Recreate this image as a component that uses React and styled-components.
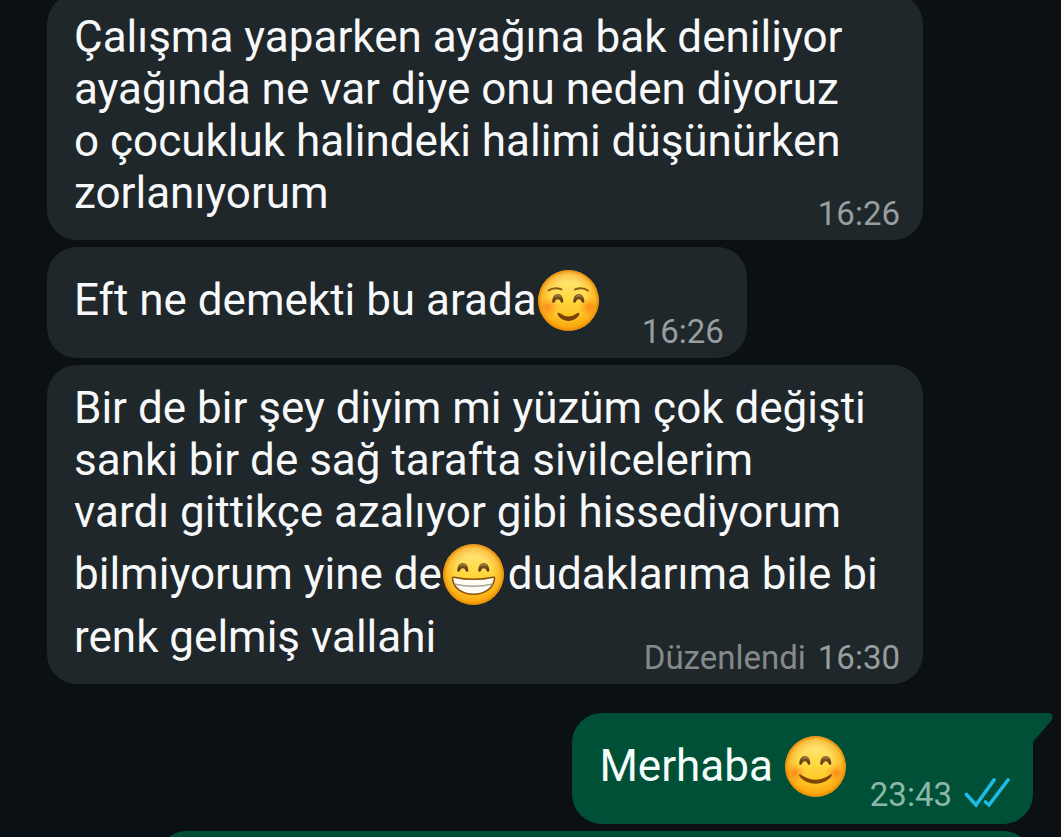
import React, { useId } from "react";
import styled, { createGlobalStyle } from "styled-components";

const GlobalStyle = createGlobalStyle`
  * {
    box-sizing: border-box;
  }

  body {
    margin: 0;
    background-color: #0b1014;
    font-family: Roboto, "Noto Sans", sans-serif;
  }
`;

const Chat = styled.main`
  display: flex;
  flex-direction: column;
  gap: 7px;
  height: 100vh;
  padding: 0 28px 0 47px;
  overflow: hidden;
`;

const Bubble = styled.article`
  position: relative;
  display: grid;
  flex-shrink: 0;
  align-self: ${({ $sent }) => ($sent ? "flex-end" : "flex-start")};
  width: ${({ $wide }) => ($wide ? "calc(100% - 110px)" : "auto")};
  min-height: 111px;
  padding: 17px 23px 7px 27px;
  border-radius: ${({ $tail }) => ($tail ? "30px 0 30px 30px" : "30px")};
  background-color: ${({ $sent }) => ($sent ? "#005038" : "#1f272a")};
  color: ${({ $sent }) => ($sent ? "#f4fdf9" : "#f7f8fa")};

  &:first-child {
    margin-top: -6px;
  }
`;

const Texto = styled.p`
  grid-area: 1 / 1;
  margin: 0;
  padding-bottom: 14px;
  font-size: 44px;
  line-height: 52px;
`;

// wide bubbles let the time share the last line with the text
const Meta = styled.footer`
  grid-area: ${({ $wide }) => ($wide ? "1 / 1" : "1 / 2")};
  display: flex;
  align-items: center;
  align-self: end;
  justify-self: end;
  gap: 12px;
  margin-left: ${({ $sent }) => ($sent ? "20px" : "39px")};
  padding-bottom: ${({ $sent }) => ($sent ? "3px" : "0")};
  color: ${({ $sent }) => ($sent ? "#8cb8a8" : "#989da0")};
  font-size: 33px;
  line-height: 38px;
`;

const Editado = styled.span`
  color: #85898b;
`;

const EmojiSvg = styled.svg`
  width: 61px;
  height: 61px;
  margin: 6px 4px 6px 1px;
  vertical-align: -22px;
`;

const Checks = styled.svg`
  width: 46px;
  height: 36px;
`;

const Tail = styled.svg`
  position: absolute;
  top: 0;
  left: 100%;
  width: 21px;
  height: 30px;
`;

const Separador = styled.div`
  height: 15px;
  flex-shrink: 0;
`;

const nomes = {
  calm: "☺️",
  grin: "😁",
  blush: "😊",
};

function Emoji({ tipo }) {
  const id = useId();
  const eyeY = tipo === "calm" ? 32 : tipo === "grin" ? 27 : 28;

  return (
    <EmojiSvg viewBox="0 0 61 61" role="img" aria-label={nomes[tipo]}>
      <defs>
        <linearGradient id={`${id}f`} x1="0" y1="0" x2="0" y2="1">
          <stop offset="0" stopColor="#ffec8c" />
          <stop offset="0.5" stopColor="#ffd63e" />
          <stop offset="1" stopColor="#ffb60f" />
        </linearGradient>
        <radialGradient id={`${id}e`}>
          <stop offset="0.6" stopColor="#f59a0a" stopOpacity="0" />
          <stop offset="0.88" stopColor="#f59a0a" stopOpacity="0.5" />
          <stop offset="1" stopColor="#e88400" />
        </radialGradient>
        <radialGradient id={`${id}b`}>
          <stop offset="0" stopColor="#ff6f14" stopOpacity="0.7" />
          <stop offset="1" stopColor="#ff8a14" stopOpacity="0" />
        </radialGradient>
        <linearGradient id={`${id}o`} x1="0" y1="0" x2="0" y2="1">
          <stop offset="0" stopColor="#8a6428" />
          <stop offset="1" stopColor="#57340a" />
        </linearGradient>
      </defs>
      <circle cx="30.5" cy="30.5" r="30.3" fill={`url(#${id}f)`} />
      <circle cx="30.5" cy="30.5" r="30.3" fill={`url(#${id}e)`} />
      {tipo !== "grin" && (
        <>
          <ellipse cx="10" cy="37" rx="11" ry="10" fill={`url(#${id}b)`} />
          <ellipse cx="51" cy="37" rx="11" ry="10" fill={`url(#${id}b)`} />
        </>
      )}
      {[14, 35].map((x) => (
        <g key={x} transform={`translate(${x} ${eyeY})`}>
          <path
            d="M0.3 -0.5C0.3 -5 2.6 -8 5.8 -8S11.3 -5 11.3 -0.5C11.3 1 9.3 1 8.7 -0.2C8 -2 7 -2.7 5.8 -2.7S3.6 -2 2.9 -0.2C2.3 1 0.3 1 0.3 -0.5Z"
            fill={`url(#${id}o)`}
          />
          <path d="M3 -5.4Q5.8 -7.6 8.6 -5.4" fill="none" stroke="#a58855" strokeWidth="1" />
        </g>
      ))}
      {tipo === "calm" && (
        <>
          <path
            d="M10.5 20.5Q16 16.5 23.5 19.4M37 19.4Q44.5 16.5 50 20.5"
            fill="none"
            stroke="#8a5912"
            strokeWidth="2"
            strokeLinecap="round"
          />
          <path
            d="M19.5 43.5Q20.5 42 22.2 43.5Q30.5 49.5 38.8 43.5Q40.5 42 41.5 43.5C41.8 45.5 37 51 30.5 51S19.2 45.5 19.5 43.5Z"
            fill="#75430a"
          />
        </>
      )}
      {tipo === "blush" && (
        <path
          d="M14 38.5Q15 37.6 16.4 39Q30.5 48.5 44.6 39Q46 37.6 47 38.5C47.2 41.8 39.5 47.7 30.5 47.7S13.8 41.8 14 38.5Z"
          fill="#804608"
        />
      )}
      {tipo === "grin" && (
        <>
          <path
            d="M9.5 34.4Q9.3 33 11 33.2Q30.5 37.5 50 33.2Q51.7 33 51.5 34.4C50.8 44 42 50.3 30.5 50.3S10.2 44 9.5 34.4Z"
            fill="#fffdf3"
            stroke="#87500b"
            strokeWidth="1.5"
          />
          <path d="M11.4 40Q30.5 44.5 49.6 40" fill="none" stroke="#a8a39a" strokeWidth="1.3" />
        </>
      )}
    </EmojiSvg>
  );
}

function Mensagem({ hora, editado, wide, sent, tail, children }) {
  return (
    <Bubble $wide={wide} $sent={sent} $tail={tail}>
      <Texto>{children}</Texto>
      {hora && (
        <Meta $wide={wide} $sent={sent}>
          {editado && <Editado>Düzenlendi</Editado>}
          <time>{hora}</time>
          {sent && (
            <Checks viewBox="0 0 46 36" aria-hidden="true">
              <path
                d="M2.5 17.5L12 28L30 3M21.5 25L25 28L44 3"
                fill="none"
                stroke="#1dbbe6"
                strokeWidth="3.6"
                strokeLinecap="round"
              />
            </Checks>
          )}
        </Meta>
      )}
      {tail && (
        <Tail viewBox="0 0 21 30" aria-hidden="true">
          <path d="M0 0H15Q19.5 0 19.5 4Q19.5 6 18 8L1.5 27Q0 29 0 30Z" fill="#005038" />
        </Tail>
      )}
    </Bubble>
  );
}

function App() {
  return (
    <>
      <GlobalStyle />
      <Chat>
        <Mensagem hora="16:26" wide>
          Çalışma yaparken ayağına bak deniliyor
          <br />
          ayağında ne var diye onu neden diyoruz
          <br />
          o çocukluk halindeki halimi düşünürken
          <br />
          zorlanıyorum
        </Mensagem>
        <Mensagem hora="16:26">
          Eft ne demekti bu arada
          <Emoji tipo="calm" />
        </Mensagem>
        <Mensagem hora="16:30" editado wide>
          Bir de bir şey diyim mi yüzüm çok değişti
          <br />
          sanki bir de sağ tarafta sivilcelerim
          <br />
          vardı gittikçe azalıyor gibi hissediyorum
          <br />
          bilmiyorum yine de
          <Emoji tipo="grin" />
          dudaklarıma bile bi
          <br />
          renk gelmiş vallahi
        </Mensagem>
        <Separador />
        <Mensagem hora="23:43" sent tail>
          Merhaba <Emoji tipo="blush" />
        </Mensagem>
        <Mensagem sent wide />
      </Chat>
    </>
  );
}

export default App;
